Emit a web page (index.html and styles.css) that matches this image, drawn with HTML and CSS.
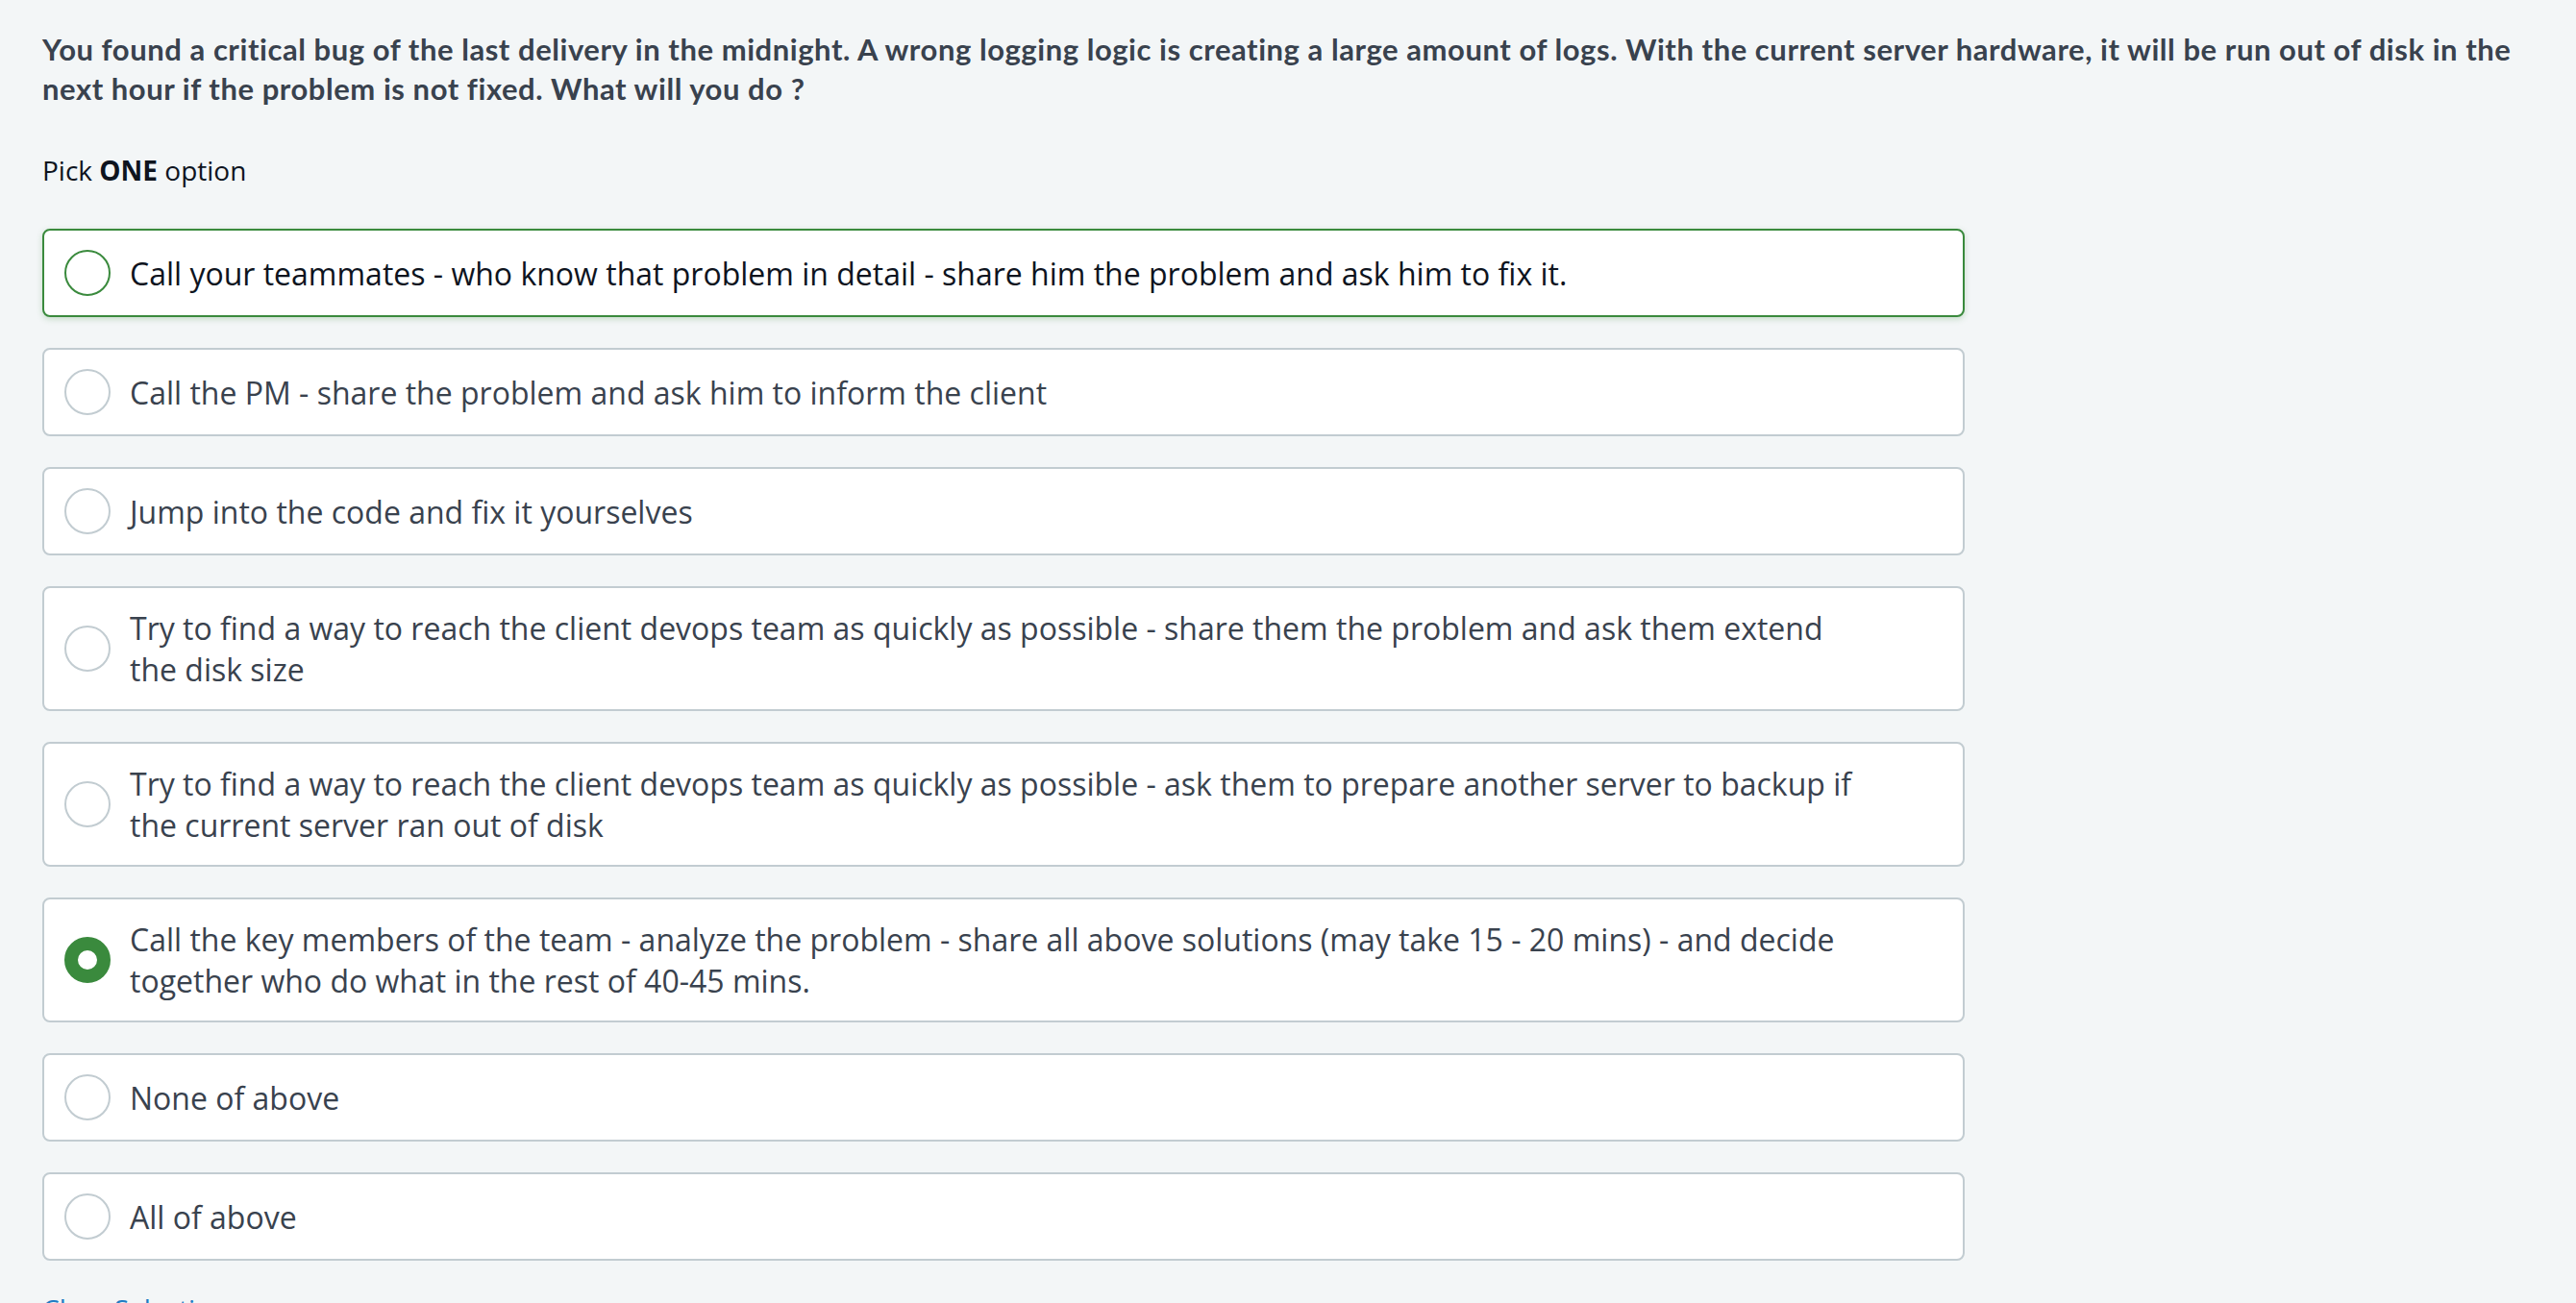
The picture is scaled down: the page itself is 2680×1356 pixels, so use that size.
FILE: index.html
```html
<!DOCTYPE html>
<html lang="en">
<head>
<meta charset="utf-8">
<title>Question</title>
<link rel="stylesheet" href="styles.css">
</head>
<body>
<main class="question">
  <p class="prompt">You found a critical bug of the last delivery in the midnight. A wrong logging logic is creating a large amount of logs. With the current server hardware, it will be run out of disk in the next hour if the problem is not fixed. What will you do ?</p>
  <p class="pick">Pick <strong>ONE</strong> option</p>
  <div class="options">
    <label class="option focused"><span class="radio"></span><span class="text">Call your teammates - who know that problem in detail - share him the problem and ask him to fix it.</span></label>
    <label class="option"><span class="radio"></span><span class="text">Call the PM - share the problem and ask him to inform the client</span></label>
    <label class="option"><span class="radio"></span><span class="text">Jump into the code and fix it yourselves</span></label>
    <label class="option"><span class="radio"></span><span class="text">Try to find a way to reach the client devops team as quickly as possible - share them the problem and ask them extend the disk size</span></label>
    <label class="option"><span class="radio"></span><span class="text">Try to find a way to reach the client devops team as quickly as possible - ask them to prepare another server to backup if the current server ran out of disk</span></label>
    <label class="option"><span class="radio checked"></span><span class="text">Call the key members of the team - analyze the problem - share all above solutions (may take 15 - 20 mins) - and decide together who do what in the rest of 40-45 mins.</span></label>
    <label class="option"><span class="radio"></span><span class="text">None of above</span></label>
    <label class="option"><span class="radio"></span><span class="text">All of above</span></label>
  </div>
  <a class="clear" href="#">Clear Selection</a>
</main>
</body>
</html>
```
FILE: styles.css
```css
html, body {
  margin: 0;
  padding: 0;
  background: #f3f6f7;
}
body {
  font-family: "Open Sans", "Liberation Sans", sans-serif;
  color: #39424e;
}
.question {
  padding: 31px 24px 0 44px;
}
.prompt {
  margin: 0;
  font-family: Lato, "Open Sans", sans-serif;
  font-weight: 700;
  font-size: 31px;
  letter-spacing: 0.55px;
  line-height: 41px;
  color: #39424e;
}
.pick {
  margin: 44px 0 0 0;
  font-size: 28px;
  line-height: 40px;
  color: #0e141e;
}
.pick strong {
  font-weight: 700;
}
.options {
  margin-top: 41px;
  width: 2000px;
  display: flex;
  flex-direction: column;
  gap: 32px;
}
.option {
  display: flex;
  align-items: center;
  gap: 20px;
  padding: 20px 100px 20px 21px;
  background: #ffffff;
  border: 2px solid #c2ccd1;
  border-radius: 8px;
  font-size: 32px;
  line-height: 43px;
  color: #39424e;
}
.option.focused {
  border-color: #3a8a3d;
  box-shadow: 0 2px 6px rgba(58, 138, 61, 0.25);
  color: #0e141e;
}
.radio {
  flex: 0 0 auto;
  width: 48px;
  height: 48px;
  box-sizing: border-box;
  border-radius: 50%;
  border: 2px solid #c2ccd1;
  background: #fff;
}
.option.focused .radio {
  border-color: #3a8a3d;
}
.radio.checked {
  border: 14px solid #3a8a3d;
}
.clear {
  display: inline-block;
  margin-top: 30px;
  font-size: 28px;
  line-height: 40px;
  color: #1f7dc4;
  text-decoration: none;
}
```
